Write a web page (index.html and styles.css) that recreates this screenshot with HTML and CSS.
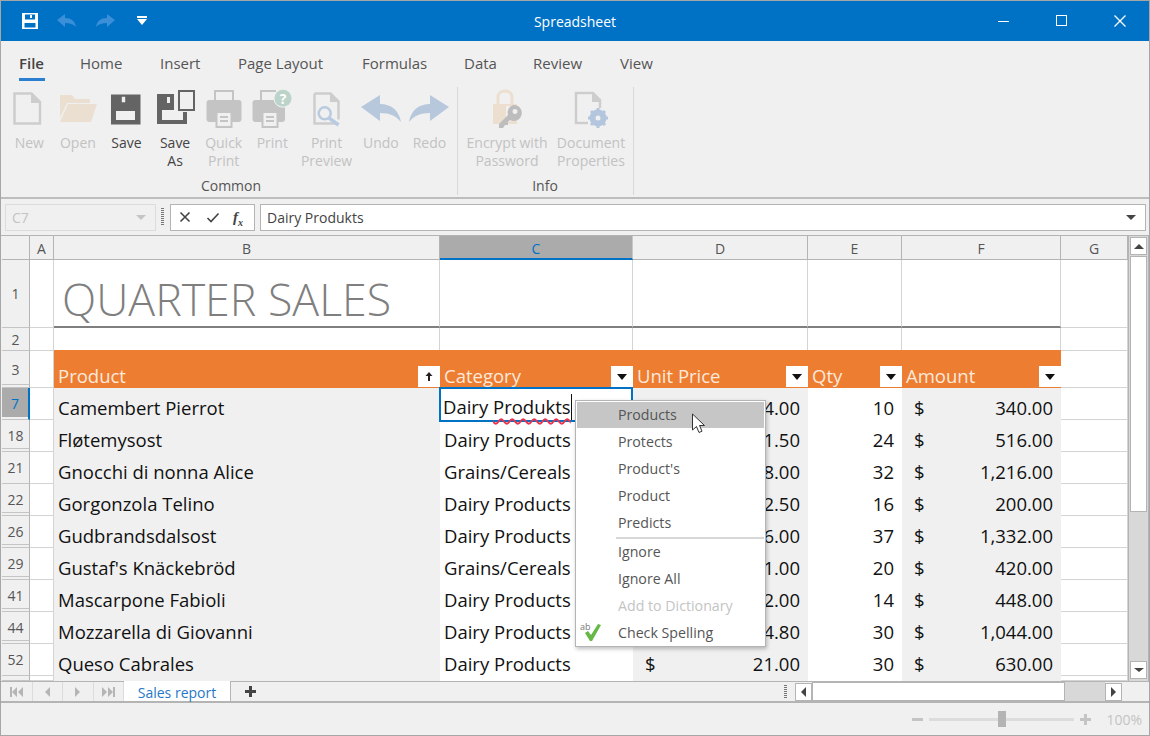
FILE: index.html
```html
<!DOCTYPE html>
<html lang="en">
<head>
  <meta charset="UTF-8">
  <title>Spreadsheet</title>
  <link rel="stylesheet" href="styles.css">
</head>
<body>
<div class="window">

  <!-- title bar -->
  <div class="titlebar">
    <div class="qat">
      <svg class="qat-save" width="18" height="18" viewBox="0 0 18 18"><path fill="#fff" fill-rule="evenodd" d="M1 1h16v16H1zM4 2.500v5h10v-5zM9 3h2v3H9zM3.500 11v4.500h11V11z"/></svg>
      <svg class="qat-arrow" width="22" height="16" viewBox="0 0 22 16"><path fill="#3b8fd8" d="M1 7 9 1v4c6 0 10 3 11 9-3-3-6-4-11-4v4z"/></svg>
      <svg class="qat-arrow" width="22" height="16" viewBox="0 0 22 16"><path fill="#3b8fd8" d="M21 7 13 1v4C7 5 3 8 2 14c3-3 6-4 11-4v4z"/></svg>
      <svg class="qat-menu" width="12" height="10" viewBox="0 0 12 10"><path fill="#fff" d="M1 0h10v2H1zM1 3h10L6 9z"/></svg>
    </div>
    <div class="title">Spreadsheet</div>
    <div class="win-btns">
      <svg width="14" height="14" viewBox="0 0 14 14"><path stroke="#fff" d="M1 7.500h11"/></svg>
      <svg width="14" height="14" viewBox="0 0 14 14"><rect x="1.500" y="1.500" width="10" height="10" fill="none" stroke="#fff"/></svg>
      <svg width="14" height="14" viewBox="0 0 14 14"><path stroke="#fff" stroke-width="1.300" d="M1.500 1.500l11 11M12.500 1.500l-11 11"/></svg>
    </div>
  </div>

  <!-- ribbon -->
  <div class="tabs">
    <div class="tab tab-active">File</div>
    <div class="tab">Home</div>
    <div class="tab">Insert</div>
    <div class="tab">Page Layout</div>
    <div class="tab">Formulas</div>
    <div class="tab">Data</div>
    <div class="tab">Review</div>
    <div class="tab">View</div>
  </div>

  <div class="ribbon">
    <div class="group group-common">
      <div class="group-btns">
        <div class="rb-btn off">
          <svg width="40" height="40" viewBox="0 0 40 40"><path fill="none" stroke="#cdcdcd" stroke-width="2.500" d="M5.500 5.500h17l8.500 8.500v21.500H5.500z"/><path fill="#cdcdcd" d="M22 5l10 10H22z"/></svg>
          <span>New</span>
        </div>
        <div class="rb-btn off">
          <svg width="40" height="40" viewBox="0 0 40 40"><path fill="#ebdfd1" d="M2 7h12l3 4h15v4H9L2 30zM10 16h29l-6 18H2z"/></svg>
          <span>Open</span>
        </div>
        <div class="rb-btn">
          <svg width="40" height="40" viewBox="0 0 40 40"><path fill="#646464" fill-rule="evenodd" d="M5 6.500h29.500v30H5zM15.800 8.700v5.600h3.400V8.700zM10 23v9h19v-9z"/></svg>
          <span>Save</span>
        </div>
        <div class="rb-btn">
          <svg width="40" height="40" viewBox="0 0 40 40"><path fill="#646464" fill-rule="evenodd" d="M2 6h17v16H7v10h21v-8h4v12H2zM12 9v6h3V9z"/><rect x="24" y="3" width="15" height="19" fill="none" stroke="#646464" stroke-width="2"/></svg>
          <span>Save<br>As</span>
        </div>
        <div class="rb-btn off">
          <svg width="40" height="40" viewBox="0 0 40 40"><rect x="2.500" y="12" width="35" height="22" rx="3" fill="#c4c4c4"/><path fill="none" stroke="#c4c4c4" stroke-width="2" d="M11 12V3h18v9"/><rect x="12.500" y="24" width="15" height="15" fill="#f0f0f0" stroke="#c4c4c4" stroke-width="2"/><path stroke="#c4c4c4" stroke-width="2" d="M16 29h8M16 33h8"/></svg>
          <span>Quick<br>Print</span>
        </div>
        <div class="rb-btn off">
          <svg width="40" height="40" viewBox="0 0 40 40"><rect x="0.500" y="12" width="32.500" height="22" rx="3" fill="#c4c4c4"/><path fill="none" stroke="#c4c4c4" stroke-width="2" d="M9 12V3h15"/><rect x="10.500" y="24" width="15" height="15" fill="#f0f0f0" stroke="#c4c4c4" stroke-width="2"/><path stroke="#c4c4c4" stroke-width="2" d="M14 29h8M14 33h8"/><circle cx="31" cy="10.300" r="9.500" fill="#f0f0f0"/><circle cx="31" cy="10.300" r="8.500" fill="#bcd3ca"/><text class="badge-text" x="31" y="15.500" text-anchor="middle">?</text></svg>
          <span>Print</span>
        </div>
        <div class="rb-btn btn-wide off">
          <svg width="40" height="40" viewBox="0 0 40 40"><path fill="none" stroke="#cdcdcd" stroke-width="2.500" d="M7.500 5.500h16l8 8v18M31.500 35.500H7.500v-30"/><path fill="#cdcdcd" d="M23 5l9 9h-9z"/><circle cx="17.700" cy="25.300" r="6" fill="#f0f0f0" stroke="#b9cbe0" stroke-width="2.500"/><path stroke="#b9cbe0" stroke-width="3.500" d="M22 30l9.500 7"/></svg>
          <span>Print<br>Preview</span>
        </div>
        <div class="rb-btn off">
          <svg width="40" height="40" viewBox="0 0 40 40"><path fill="#b7c8dc" d="M0 19 19 7v9c11 0 19 6 21 18-5-6-11-9-21-9v8z"/></svg>
          <span>Undo</span>
        </div>
        <div class="rb-btn off">
          <svg width="40" height="40" viewBox="0 0 40 40"><path fill="#b7c8dc" d="M40 19 21 7v9C10 16 2 22 0 34c5-6 11-9 21-9v8z"/></svg>
          <span>Redo</span>
        </div>
      </div>
      <div class="group-name">Common</div>
    </div>
    <div class="group group-info">
      <div class="group-btns">
        <div class="rb-btn btn-info off">
          <svg width="40" height="40" viewBox="0 0 40 40"><path fill="none" stroke="#ecdfd0" stroke-width="3" d="M11 16V9c0-8 14-8 14 0v7"/><path fill="#ecdfd0" d="M6 16h24v20H6z"/><path fill="#f0f0f0" d="M19 18h13v10l-13 8z"/><path fill="#bdbdbd" fill-rule="evenodd" d="M26 17a8 8 0 1 1-3 15l-2 2v3h-3l-2 3h-4v-4l9-9a8 8 0 0 1 5-10zM28 21a2.500 2.500 0 1 0 .01 0z"/></svg>
          <span>Encrypt with<br>Password</span>
        </div>
        <div class="rb-btn btn-info off">
          <svg width="40" height="40" viewBox="0 0 40 40"><path fill="none" stroke="#cdcdcd" stroke-width="2.500" d="M17 35H5V5h17l7 7v8"/><path fill="#cdcdcd" d="M21 5l9 9h-9z"/><circle cx="27" cy="30" r="6" fill="none" stroke="#b3c6de" stroke-width="5"/><path stroke="#b3c6de" stroke-width="3" d="M27 20v20M17 30h20M20 23l14 14M34 23 20 37"/><circle cx="27" cy="30" r="2.500" fill="#f0f0f0"/></svg>
          <span>Document<br>Properties</span>
        </div>
      </div>
      <div class="group-name">Info</div>
    </div>
  </div>

  <!-- formula bar -->
  <div class="formula-bar">
    <div class="name-box"><span>C7</span><i class="tri tri-off"></i></div>
    <div class="grip-v"></div>
    <div class="fx-btns">
      <svg width="14" height="14" viewBox="0 0 14 14"><path stroke="#444" stroke-width="1.600" d="M2.500 2.500l9 9M11.500 2.500l-9 9"/></svg>
      <svg width="14" height="14" viewBox="0 0 14 14"><path fill="none" stroke="#444" stroke-width="1.600" d="M1.500 8l3.500 3.500 7.500-8"/></svg>
      <span class="fx-label">f<sub>x</sub></span>
    </div>
    <div class="formula-input"><span>Dairy Produkts</span><i class="tri"></i></div>
  </div>

  <!-- sheet -->
  <div class="sheet-area">
    <div class="sheet">
      <div class="corner"></div>
      <div class="colhead">A</div>
      <div class="colhead">B</div>
      <div class="colhead colhead-on">C</div>
      <div class="colhead">D</div>
      <div class="colhead">E</div>
      <div class="colhead">F</div>
      <div class="colhead">G</div>

      <div class="rowhead">1</div>
      <div class="cell"></div>
      <div class="cell cell-title"><span>QUARTER SALES</span></div>
      <div class="cell cell-rule"></div>
      <div class="cell cell-rule"></div>
      <div class="cell cell-rule"></div>
      <div class="cell cell-rule"></div>
      <div class="cell"></div>

      <div class="rowhead">2</div>
      <div class="cell"></div>
      <div class="cell"></div>
      <div class="cell"></div>
      <div class="cell"></div>
      <div class="cell"></div>
      <div class="cell"></div>
      <div class="cell"></div>

      <div class="rowhead hidden-after">3</div>
      <div class="cell"></div>
      <div class="hd"><span>Product</span><b class="filter"><svg width="8" height="9" viewBox="0 0 8 9"><path fill="#222" d="M4 0 7.500 4H5v5H3V4H.5z"/></svg></b></div>
      <div class="hd"><span>Category</span><b class="filter"><i class="tri tri-black"></i></b></div>
      <div class="hd"><span>Unit Price</span><b class="filter"><i class="tri tri-black"></i></b></div>
      <div class="hd"><span>Qty</span><b class="filter"><i class="tri tri-black"></i></b></div>
      <div class="hd"><span>Amount</span><b class="filter"><i class="tri tri-black"></i></b></div>
      <div class="cell"></div>

      <div class="rowhead rowhead-on">7</div>
      <div class="cell"></div>
      <div class="td band">Camembert Pierrot</div>
      <div class="td"></div>
      <div class="td band money"><span>$</span><span>34.00</span></div>
      <div class="td num">10</div>
      <div class="td band money"><span>$</span><span>340.00</span></div>
      <div class="cell"></div>

      <div class="rowhead hidden-after">18</div>
      <div class="cell"></div>
      <div class="td band">Fløtemysost</div>
      <div class="td">Dairy Products</div>
      <div class="td band money"><span>$</span><span>21.50</span></div>
      <div class="td num">24</div>
      <div class="td band money"><span>$</span><span>516.00</span></div>
      <div class="cell"></div>

      <div class="rowhead">21</div>
      <div class="cell"></div>
      <div class="td band">Gnocchi di nonna Alice</div>
      <div class="td">Grains/Cereals</div>
      <div class="td band money"><span>$</span><span>38.00</span></div>
      <div class="td num">32</div>
      <div class="td band money"><span>$</span><span>1,216.00</span></div>
      <div class="cell"></div>

      <div class="rowhead hidden-after">22</div>
      <div class="cell"></div>
      <div class="td band">Gorgonzola Telino</div>
      <div class="td">Dairy Products</div>
      <div class="td band money"><span>$</span><span>12.50</span></div>
      <div class="td num">16</div>
      <div class="td band money"><span>$</span><span>200.00</span></div>
      <div class="cell"></div>

      <div class="rowhead hidden-after">26</div>
      <div class="cell"></div>
      <div class="td band">Gudbrandsdalsost</div>
      <div class="td">Dairy Products</div>
      <div class="td band money"><span>$</span><span>36.00</span></div>
      <div class="td num">37</div>
      <div class="td band money"><span>$</span><span>1,332.00</span></div>
      <div class="cell"></div>

      <div class="rowhead hidden-after">29</div>
      <div class="cell"></div>
      <div class="td band">Gustaf's Knäckebröd</div>
      <div class="td">Grains/Cereals</div>
      <div class="td band money"><span>$</span><span>21.00</span></div>
      <div class="td num">20</div>
      <div class="td band money"><span>$</span><span>420.00</span></div>
      <div class="cell"></div>

      <div class="rowhead hidden-after">41</div>
      <div class="cell"></div>
      <div class="td band">Mascarpone Fabioli</div>
      <div class="td">Dairy Products</div>
      <div class="td band money"><span>$</span><span>32.00</span></div>
      <div class="td num">14</div>
      <div class="td band money"><span>$</span><span>448.00</span></div>
      <div class="cell"></div>

      <div class="rowhead hidden-after">44</div>
      <div class="cell"></div>
      <div class="td band">Mozzarella di Giovanni</div>
      <div class="td">Dairy Products</div>
      <div class="td band money"><span>$</span><span>34.80</span></div>
      <div class="td num">30</div>
      <div class="td band money"><span>$</span><span>1,044.00</span></div>
      <div class="cell"></div>

      <div class="rowhead">52</div>
      <div class="cell"></div>
      <div class="td band">Queso Cabrales</div>
      <div class="td">Dairy Products</div>
      <div class="td band money"><span>$</span><span>21.00</span></div>
      <div class="td num">30</div>
      <div class="td band money"><span>$</span><span>630.00</span></div>
      <div class="cell"></div>

      <!-- next row, cut off by the tab strip -->
      <div class="rowhead"></div>
      <div class="cell"></div>
      <div class="td band"></div>
      <div class="td"></div>
      <div class="td band"></div>
      <div class="td"></div>
      <div class="td band"></div>
      <div class="cell"></div>

      <!-- editor and spell menu sit over the cells -->
      <div class="editor"><u>Dairy <span class="typo">Produkts</span></u></div>

      <div class="spell-menu">
        <div class="mi mi-hot">Products</div>
        <div class="mi">Protects</div>
        <div class="mi">Product's</div>
        <div class="mi">Product</div>
        <div class="mi">Predicts</div>
        <div class="mi-sep"></div>
        <div class="mi">Ignore</div>
        <div class="mi">Ignore All</div>
        <div class="mi mi-off">Add to Dictionary</div>
        <div class="mi">
          <span class="mi-icon">
            <svg width="22" height="22" viewBox="0 0 22 22"><text class="ab-text" x="0" y="9">ab</text><path fill="#67b846" d="M5 12l3-2 3 4 7-11 3 1-9 16h-2z"/></svg>
          </span>
          Check Spelling
        </div>
      </div>

      <svg class="mouse" width="16" height="22" viewBox="0 0 16 22"><path fill="#fff" stroke="#333" d="M1.500 1v16l4-3.500 2.500 6 3-1.300-2.500-5.700h5z"/></svg>
    </div>

    <div class="vscroll">
      <div class="sb-btn"><i class="tri tri-up"></i></div>
      <div class="sb-thumb"></div>
      <div class="sb-track"></div>
      <div class="sb-btn"><i class="tri tri-small"></i></div>
    </div>
  </div>

  <!-- sheet tabs and horizontal scrollbar -->
  <div class="sheet-tabs">
    <div class="nav">
      <div class="nav-btn"><svg width="13" height="10" viewBox="0 0 13 10"><path fill="#b5b5b5" d="M0 0h2v10H0zM7 0v10L2 5zM13 0v10L8 5z"/></svg></div>
      <div class="nav-btn"><svg width="7" height="10" viewBox="0 0 7 10"><path fill="#b5b5b5" d="M6 0v10L1 5z"/></svg></div>
      <div class="nav-btn"><svg width="7" height="10" viewBox="0 0 7 10"><path fill="#b5b5b5" d="M1 0v10l5-5z"/></svg></div>
      <div class="nav-btn"><svg width="13" height="10" viewBox="0 0 13 10"><path fill="#b5b5b5" d="M0 0v10l5-5zM6 0v10l5-5zM11 0h2v10h-2z"/></svg></div>
    </div>
    <div class="sheet-tab">Sales report</div>
    <div class="add-sheet">
      <svg width="11" height="11" viewBox="0 0 11 11"><path fill="#444" d="M4 0h3v4h4v3H7v4H4V7H0V4h4z"/></svg>
    </div>
    <div class="hscroll">
      <div class="grip-v grip-h"></div>
      <div class="sb-btn sb-btn-h"><i class="tri tri-left"></i></div>
      <div class="hs-track"><div class="hs-thumb"></div></div>
      <div class="sb-btn sb-btn-h"><i class="tri tri-right"></i></div>
    </div>
  </div>

  <!-- status bar -->
  <div class="statusbar">
    <svg width="11" height="3" viewBox="0 0 11 3"><path fill="#c4c4c4" d="M0 0h11v3H0z"/></svg>
    <div class="zoom-track"><div class="zoom-thumb"></div></div>
    <svg width="11" height="11" viewBox="0 0 11 11"><path fill="#c4c4c4" d="M4 0h3v4h4v3H7v4H4V7H0V4h4z"/></svg>
    <span class="zoom-val">100%</span>
  </div>
</div>
</body>
</html>
```

FILE: styles.css
```css
* {
  box-sizing: border-box;
}

html, body {
  margin: 0;
  padding: 0;
}

body {
  width: 1150px;
  height: 736px;
  overflow: hidden;
  font-family: "Open Sans", "Noto Sans", sans-serif;
  font-size: 14px;
  color: #444;
  background: #f0f0f0;
}

.window {
  display: flex;
  flex-direction: column;
  width: 1150px;
  height: 736px;
  border: 1px solid #a6a6a6;
  background: #f0f0f0;
}

/* title bar */
.titlebar {
  flex: none;
  display: grid;
  grid-template-columns: 1fr auto 1fr;
  align-items: center;
  height: 40px;
  background: #0072c6;
}

.qat {
  display: flex;
  align-items: center;
  padding-left: 20px;
}

.qat-arrow {
  margin-left: 16px;
}

.qat-save {
  margin-right: 1px;
}

.qat-menu {
  margin-left: 20px;
}

.title {
  text-align: center;
  font-size: 14px;
  color: #fff;
}

.win-btns {
  display: flex;
  justify-content: flex-end;
  gap: 44px;
  padding-right: 22px;
}

/* ribbon tabs */
.tabs {
  flex: none;
  display: grid;
  grid-template-columns: 61px 80px 78px 124px 102px 69px 87px 1fr;
  height: 40px;
  padding-left: 18px;
  font-size: 15px;
  line-height: 45px;
}

.tab {
  color: #555;
  white-space: nowrap;
}

.tab-active {
  position: relative;
  font-weight: 600;
  color: #444;
}

.tab-active::after {
  content: "";
  position: absolute;
  left: 0;
  top: 37px;
  width: 26px;
  height: 3px;
  background: #2a7fcf;
}

.ribbon {
  flex: none;
  display: flex;
  height: 118px;
  padding: 6px 0 0 4px;
  border-bottom: 2px solid #bdbdbd;
}

.group {
  display: flex;
  flex-direction: column;
  height: 108px;
  border-right: 1px solid #d8d8d8;
}

.group-common {
  width: 453px;
}

.group-info {
  width: 176px;
  padding-left: 7px;
}

.group-info .group-name {
  padding-right: 8px;
}

.group-btns {
  flex: 1;
  display: flex;
  padding-top: 1px;
}

.group-name {
  text-align: center;
  font-size: 14px;
  line-height: 18px;
  height: 18px;
  color: #555;
}

.rb-btn {
  width: 48.600px;
  text-align: center;
  font-size: 14px;
  line-height: 18px;
  color: #444;
  white-space: nowrap;
}

.rb-btn svg {
  display: block;
  margin: 0 auto 6px;
}

.rb-btn span {
  display: block;
}

.rb-btn.off {
  color: #c2c2c2;
}

.btn-wide {
  width: 60px;
}

.btn-info {
  width: 84px;
}

.badge-text {
  font: bold 14px "Open Sans", sans-serif;
  fill: #fff;
}

/* formula bar */
.formula-bar {
  flex: none;
  display: flex;
  align-items: center;
  height: 36px;
  padding: 0 3px 0 4px;
}

.name-box {
  display: flex;
  align-items: center;
  justify-content: space-between;
  width: 151px;
  height: 27px;
  padding: 0 9px 0 6px;
  border: 1px solid #dcdcdc;
  color: #c4c4c4;
}

.grip-v {
  flex: none;
  width: 3px;
  height: 18px;
  margin: 0 6px 0 5px;
  background: repeating-linear-gradient(to bottom, #777 0 1px, #f0f0f0 1px 2px);
}

.fx-btns {
  display: flex;
  align-items: center;
  justify-content: space-between;
  width: 85px;
  height: 27px;
  padding: 0 7px;
  background: #fff;
  border: 1px solid #b4b4b4;
}

.fx-label {
  width: 14px;
  font-family: "Liberation Serif", serif;
  font-style: italic;
  font-weight: bold;
  font-size: 15px;
  color: #444;
}

.fx-label sub {
  font-size: 10px;
  line-height: 0;
}

.formula-input {
  flex: 1;
  display: flex;
  align-items: center;
  justify-content: space-between;
  height: 27px;
  margin-left: 5px;
  padding: 0 9px 0 6px;
  background: #fff;
  border: 1px solid #b4b4b4;
  color: #444;
}

.tri {
  display: block;
  width: 0;
  height: 0;
  border-style: solid;
  border-width: 5px 5px 0;
  border-color: #444 transparent transparent;
}

.tri-off {
  border-top-color: #c4c4c4;
}

.tri-black {
  border-width: 6px 5px 0;
  border-top-color: #111;
}

.tri-small {
  border-width: 4px 5px 0;
}

.tri-up {
  border-width: 0 5px 5px;
  border-color: transparent transparent #444;
}

.tri-left {
  border-width: 5px 5px 5px 0;
  border-color: transparent #444 transparent transparent;
}

.tri-right {
  border-width: 5px 0 5px 5px;
  border-color: transparent transparent transparent #444;
}

/* sheet */
.sheet-area {
  flex: none;
  display: flex;
  height: 446px;
  border-top: 1px solid #b4b4b4;
  overflow: hidden;
}

.sheet {
  position: relative;
  display: grid;
  grid-template-columns: 28px 24px 386px 193px 175px 94px 159px 67px;
  grid-template-rows: 24px 68px 23px 37px repeat(9, 32px) 1fr;
  width: 1126px;
  margin-left: 1px;
  background: #fff;
  overflow: hidden;
}

.corner,
.colhead {
  background: #f0f0f0;
  border-right: 1px solid #b4b4b4;
  border-bottom: 1px solid #b4b4b4;
}

.colhead {
  text-align: center;
  font-size: 14px;
  line-height: 25px;
  color: #555;
}

.colhead-on {
  background: #ababab;
  color: #0072c6;
  border-bottom: 2px solid #0072c6;
  border-right-color: #c8c8c8;
}

.rowhead {
  display: flex;
  align-items: center;
  justify-content: center;
  background: #f0f0f0;
  border-right: 1px solid #b4b4b4;
  border-bottom: 1px solid #c4c4c4;
  font-size: 14px;
  color: #555;
}

/* hidden rows after this one show as a second line */
.hidden-after {
  box-shadow: inset 0 -2px 0 #f0f0f0, inset 0 -3px 0 #c4c4c4;
}

.rowhead-on {
  background: #ababab;
  color: #0072c6;
  border-right: 2px solid #0072c6;
  box-shadow: inset 0 -2px 0 #f0f0f0;
}

.cell {
  border-right: 1px solid #d4d4d4;
  border-bottom: 1px solid #d4d4d4;
}

.cell-title {
  border-bottom: 2px solid #7f7f7f;
  color: #7f7f7f;
  font-size: 44.700px;
  font-weight: 300;
  line-height: 78px;
  padding-left: 8px;
  white-space: nowrap;
}

.cell-rule {
  border-bottom: 2px solid #7f7f7f;
}

.hd {
  display: flex;
  align-items: flex-end;
  justify-content: space-between;
  padding: 0 0 1px 4px;
  margin-top: -1px;
  background: #ed7d31;
  color: #fde9dc;
  font-size: 18.500px;
  line-height: 22px;
  white-space: nowrap;
  overflow: hidden;
}

.filter {
  flex: none;
  display: flex;
  align-items: center;
  justify-content: center;
  width: 22px;
  height: 21px;
  background: #fff;
}

.td {
  padding-left: 4px;
  font-size: 18.500px;
  line-height: 40px;
  color: #111;
  white-space: nowrap;
  overflow: hidden;
}

.band {
  background: #f0f0f0;
}

.num {
  padding-right: 8px;
  text-align: right;
}

.money {
  display: flex;
  justify-content: space-between;
  padding: 0 8px 0 12px;
}

.editor {
  position: absolute;
  left: 437px;
  top: 151px;
  width: 194px;
  height: 35px;
  padding: 5px 0 0 2px;
  background: #fff;
  border: 2px solid #0072c6;
  font-size: 18.500px;
  line-height: 26px;
  color: #111;
  white-space: nowrap;
}

.editor u {
  display: inline-block;
  text-decoration: none;
  border-right: 1px solid #111;
}

.typo {
  text-decoration: underline wavy #f0304a 1.500px;
  text-underline-offset: 4px;
}

/* spell menu */
.spell-menu {
  position: absolute;
  left: 573px;
  top: 164px;
  width: 191px;
  height: 247px;
  padding: 1px;
  background: #fff;
  border: 1px solid #b4b4b4;
  box-shadow: 1px 2px 4px rgba(0, 0, 0, 0.25);
  font-size: 14.200px;
  color: #555;
}

.mi {
  position: relative;
  height: 27px;
  padding-left: 41px;
  line-height: 26px;
  white-space: nowrap;
}

.mi-hot {
  height: 26px;
  margin-bottom: 1px;
  background: #c6c6c6;
}

.mi-off {
  color: #c4c4c4;
}

.mi-sep {
  height: 2px;
  margin-left: 39px;
  background: #d8d8d8;
}

.mi-icon {
  position: absolute;
  left: 3px;
  top: 1px;
}

.ab-text {
  font: 9px "Open Sans", sans-serif;
  fill: #777;
}

.mouse {
  position: absolute;
  left: 689px;
  top: 177px;
}

/* scrollbars */
.vscroll {
  flex: none;
  display: flex;
  flex-direction: column;
  gap: 1px;
  width: 21px;
  padding: 1px 1px 2px 1px;
  background: #d8d8d8;
  border-left: 1px solid #b4b4b4;
  border-right: 1px solid #b4b4b4;
}

.sb-btn {
  flex: none;
  display: flex;
  align-items: center;
  justify-content: center;
  height: 18px;
  background: #fff;
  border: 1px solid #b4b4b4;
}

.sb-thumb {
  flex: none;
  height: 256px;
  background: #fff;
  border: 1px solid #b4b4b4;
}

.sb-track {
  flex: 1;
}

.sheet-tabs {
  flex: none;
  display: flex;
  height: 22px;
  border-top: 1px solid #b4b4b4;
  border-bottom: 2px solid #b4b4b4;
}

.nav {
  display: flex;
  width: 123px;
  padding-left: 1px;
}

.nav-btn {
  display: flex;
  align-items: center;
  justify-content: center;
  flex: 1;
  border-right: 1px solid #dcdcdc;
}

.sheet-tab {
  width: 107px;
  margin-top: -1px;
  background: #fff;
  text-align: center;
  font-size: 14px;
  line-height: 24px;
  color: #1f78c8;
  border-right: 1px solid #b4b4b4;
}

.add-sheet {
  display: flex;
  align-items: center;
  justify-content: center;
  width: 39px;
}

.hscroll {
  flex: 1;
  display: flex;
  align-items: center;
  justify-content: flex-start;
}

.grip-h {
  margin: 0 8px 0 514px;
  height: 14px;
}

.sb-btn-h {
  width: 17px;
  height: 18px;
}

.hs-track {
  width: 293px;
  height: 19px;
  background: #d8d8d8;
}

.hs-thumb {
  width: 253px;
  height: 19px;
  background: #fff;
  border: 1px solid #b4b4b4;
}

/* status bar */
.statusbar {
  flex: 1;
  display: flex;
  align-items: center;
  justify-content: flex-end;
  padding: 0 7px 0 0;
}

.zoom-track {
  position: relative;
  width: 145px;
  height: 3px;
  margin: 0 6px;
  background: #dcdcdc;
}

.zoom-thumb {
  position: absolute;
  left: 69px;
  top: -7px;
  width: 8px;
  height: 16px;
  background: #b4b4b4;
}

.zoom-val {
  margin-left: 15px;
  color: #c4c4c4;
}
```
